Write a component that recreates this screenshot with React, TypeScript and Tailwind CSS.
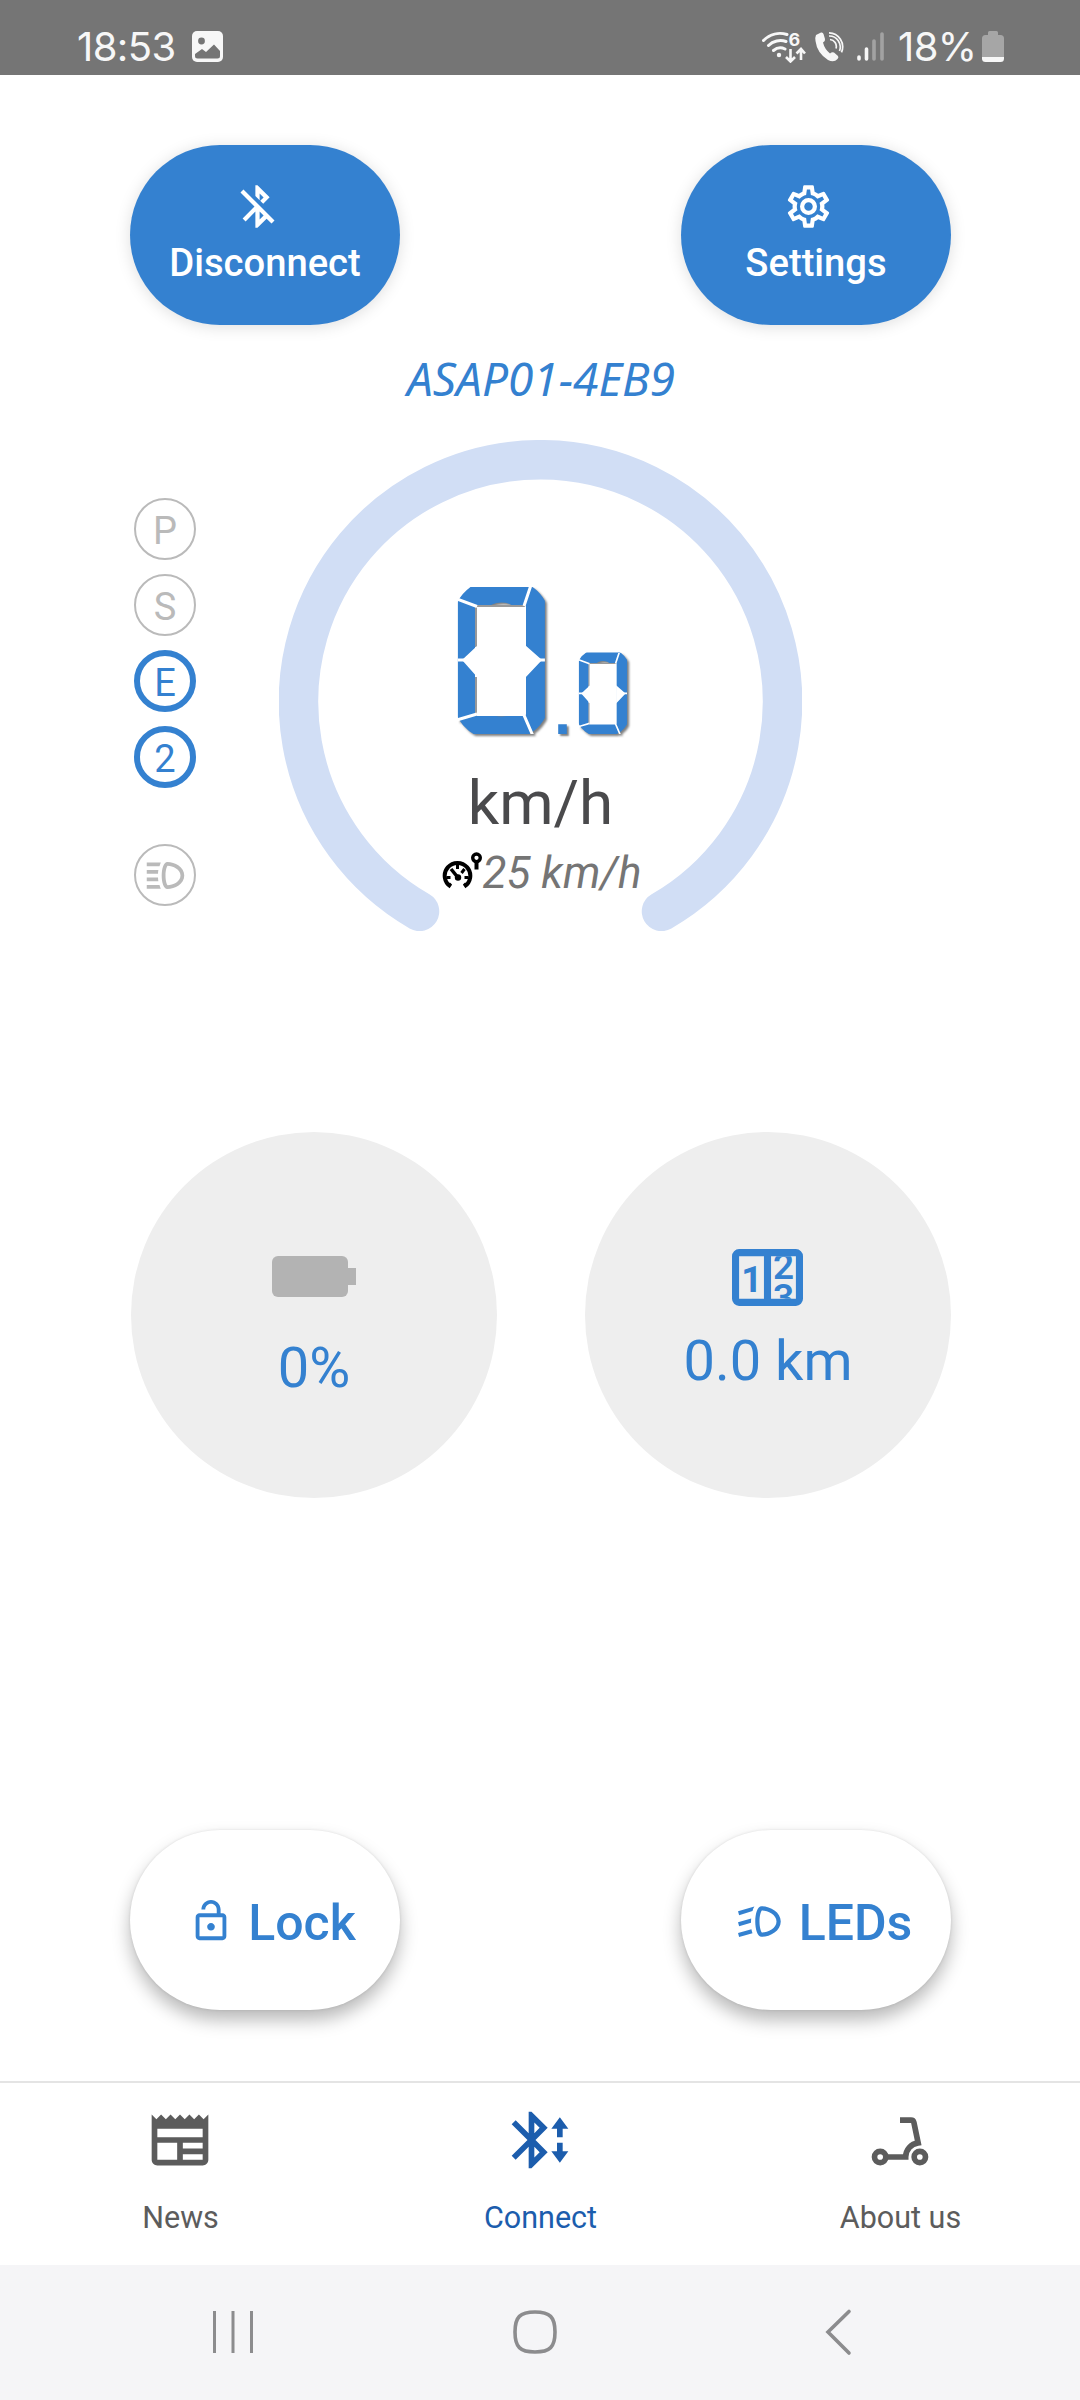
import React from 'react';
import clsx from 'clsx';
import { MdBluetoothDisabled, MdOutlineLockOpen, MdOutlineNewspaper } from 'react-icons/md';

const CogIcon = ({ className }: { className?: string }) => (
  <svg viewBox="0 0 24 24" fill="currentColor" className={className}>
    <path d="M12,8A4,4 0 0,1 16,12A4,4 0 0,1 12,16A4,4 0 0,1 8,12A4,4 0 0,1 12,8M12,10A2,2 0 0,0 10,12A2,2 0 0,0 12,14A2,2 0 0,0 14,12A2,2 0 0,0 12,10M10,22C9.75,22 9.54,21.82 9.5,21.58L9.13,18.93C8.5,18.68 7.96,18.34 7.44,17.94L4.95,18.95C4.73,19.03 4.46,18.95 4.34,18.73L2.34,15.27C2.21,15.05 2.27,14.78 2.46,14.63L4.57,12.97L4.5,12L4.57,11L2.46,9.37C2.27,9.22 2.21,8.95 2.34,8.73L4.34,5.27C4.46,5.05 4.73,4.96 4.95,5.05L7.44,6.05C7.96,5.66 8.5,5.32 9.13,5.07L9.5,2.42C9.54,2.18 9.75,2 10,2H14C14.25,2 14.46,2.18 14.5,2.42L14.87,5.07C15.5,5.32 16.04,5.66 16.56,6.05L19.05,5.05C19.27,4.96 19.54,5.05 19.66,5.27L21.66,8.73C21.79,8.95 21.73,9.22 21.54,9.37L19.43,11L19.5,12L19.43,13L21.54,14.63C21.73,14.78 21.79,15.05 21.66,15.27L19.66,18.73C19.54,18.95 19.27,19.04 19.05,18.95L16.56,17.95C16.04,18.34 15.5,18.68 14.87,18.93L14.5,21.58C14.46,21.82 14.25,22 14,22H10M11.25,4L10.88,6.61C9.68,6.86 8.62,7.5 7.85,8.39L5.44,7.35L4.69,8.65L6.8,10.2C6.4,11.37 6.4,12.64 6.8,13.8L4.68,15.36L5.43,16.66L7.86,15.62C8.63,16.5 9.68,17.14 10.87,17.38L11.24,20H12.76L13.13,17.39C14.32,17.14 15.37,16.5 16.14,15.62L18.57,16.66L19.32,15.36L17.2,13.81C17.6,12.64 17.6,11.37 17.2,10.2L19.31,8.65L18.56,7.35L16.15,8.39C15.38,7.5 14.32,6.86 13.12,6.62L12.75,4H11.25Z" />
  </svg>
);

const lampPath =
  'M13,4.8C9,4.8 9,19.2 13,19.2C17,19.2 22,16.5 22,12C22,7.5 17,4.8 13,4.8M13.1,17.2C12.7,16.8 12,15 12,12C12,9 12.7,7.2 13.1,6.8C16,6.9 20,8.7 20,12C20,15.3 16,17.1 13.1,17.2';

const HighBeamIcon = ({ className }: { className?: string }) => (
  <svg viewBox="0 0 24 24" fill="currentColor" className={className}>
    <path d={lampPath} />
    <path d="M2,5H9.5C9.3,5.6 9,6.3 8.8,7H2V5M8,11H2V9H8.2C8.1,9.6 8,10.3 8,11M8.2,15H2V13H8C8,13.7 8.1,14.4 8.2,15M9.5,19H2V17H8.8C9,17.7 9.2,18.4 9.5,19" />
  </svg>
);

const LowBeamIcon = ({ className }: { className?: string }) => (
  <svg viewBox="0 0 24 24" fill="currentColor" className={className}>
    <path d={lampPath} />
    <path d="M9.6,4.9C9.2,5.5 8.9,6.2 8.7,7.1L2.4,9.1L1.9,7.2L9.6,4.9M8.1,10.6C8,11.3 8,12 8,12.6L2.4,14.2L1.9,12.3L8.1,10.6M8.2,15.6C8.3,16.3 8.5,16.9 8.7,17.5L2.4,19.3L1.9,17.4L8.2,15.6" />
  </svg>
);

const BluetoothTransferIcon = ({ className }: { className?: string }) => (
  <svg viewBox="0 0 24 24" fill="currentColor" className={className}>
    <path d="M14.71,7.71L10.41,12L14.71,16.29L9,22H8V14.41L3.41,19L2,17.59L7.59,12L2,6.41L3.41,5L8,9.59V2H9L14.71,7.71M10,5.83V9.59L11.88,7.71L10,5.83M11.88,16.29L10,14.41V18.17L11.88,16.29M22,8H20V11H18V8H16L19,4L22,8M22,16L19,20L16,16H18V13H20V16H22Z" />
  </svg>
);

const ScooterIcon = ({ className }: { className?: string }) => (
  <svg viewBox="0 0 24 24" fill="none" stroke="currentColor" strokeWidth="2" className={className}>
    <circle cx="5" cy="18" r="2" />
    <circle cx="19" cy="18" r="2" />
    <path d="M7 18h7A5 5 0 0 1 18.4 13L16.9 5.8Q16.7 5 15.9 5H12" />
  </svg>
);

const CounterIcon = ({ className }: { className?: string }) => (
  <svg viewBox="2 4 20 16" className={className}>
    <clipPath id="reel">
      <rect x="13" y="6" width="7" height="12" />
    </clipPath>
    <path
      fillRule="evenodd"
      fill="currentColor"
      d="M4 4h16a2 2 0 0 1 2 2v12a2 2 0 0 1-2 2H4a2 2 0 0 1-2-2V6a2 2 0 0 1 2-2zM4 6v12h7V6zM13 6v12h7V6z"
    />
    <g fill="currentColor" fontFamily="Roboto, sans-serif" fontWeight="700" fontSize="10.4" textAnchor="middle">
      <text x="7.6" y="16">1</text>
      <g clipPath="url(#reel)" fontWeight="600">
        <text x="16.5" y="12.5">2</text>
        <text x="16.5" y="21.2">3</text>
      </g>
    </g>
  </svg>
);

const SpeedLimitIcon = ({ className }: { className?: string }) => (
  <svg viewBox="0 0 40 38" fill="none" stroke="black" className={className}>
    <path d="M8.2 34.6A12.8 12.8 0 1 1 21.8 34.6" strokeWidth="4" />
    <path d="M4 25.5h4M22 25.5h4M15 12v5M22 17l-3 4M8.5 31.5L6 34M21.5 31.5L24 34" strokeWidth="3" />
    <path d="M8.5 17L15 25" strokeWidth="3.5" />
    <circle cx="15.5" cy="25.5" r="3.2" fill="black" stroke="none" />
    <circle cx="34" cy="5.8" r="3.8" strokeWidth="3.4" />
    <path d="M34 9v8.5" strokeWidth="4" />
  </svg>
);

// LCD style digit: the glyph is trimmed to a box and white joints split it into segments
const LcdDigit = ({ className, children }: { className: string; children: React.ReactNode }) => (
  <span className="drop-shadow-[2px_2px_1px_rgba(0,0,0,0.5)]">
    <span
      className={clsx(
        'relative flex h-[0.662em] w-[0.392em] items-center justify-center leading-[0.662em] font-bold [clip-path:inset(0_round_0.045em)]',
        className,
      )}
    >
      <span className="pt-[0.028em]">{children}</span>
      <svg viewBox="0 0 87 147" className="absolute inset-0 h-full w-full">
        <rect x="17" y="18" width="51" height="111" rx="2" fill="white" />
        <path d="M18 129V90M18 60V19H67" fill="none" stroke="black" strokeOpacity="0.4" strokeWidth="2" />
        <path d="M20 58V91L4 73zM67 58V91L84 73z" fill="white" />
        <path d="M-1 12L19 19.500M73 -2L66 19M-1 133L19 127M65 126L75 149M-1 73H8M80 73H88" stroke="white" strokeWidth="3" />
      </svg>
    </span>
  </span>
);

const StatusBar = () => (
  <header className="flex h-[75px] shrink-0 items-end justify-between bg-[#757575] pr-[76px] pb-[13px] pl-[77px] text-[#f7f7f7]">
    <div className="flex h-[31px] items-center gap-[17px]">
      <span className="w-[98px] font-[Inter,sans-serif] text-[40px] leading-[31px] tracking-[-0.6px] whitespace-nowrap">18:53</span>
      <svg viewBox="0 0 31 31" className="size-[31px]">
        <rect width="31" height="31" rx="5" fill="currentColor" />
        <circle cx="9.5" cy="10" r="3.4" fill="#757575" />
        <path d="M3 23l7-5 4 3 8-7.500 6 6.500v5a2.500 2.500 0 0 1-2.500 2.500H5.500A2.500 2.500 0 0 1 3 25z" fill="#757575" />
      </svg>
    </div>
    <div className="flex h-[31px] items-center">
      <svg viewBox="0 0 44 32" fill="none" stroke="currentColor" className="h-[32px] w-[44px]">
        <path d="M1.500 9.500C8 3 17 1 25 3.500M6.500 14.500C11 10 18 8.500 24 10.500M11.500 19.500C15 16.500 19 16 23 18" strokeWidth="3" strokeLinecap="round" />
        <circle cx="17" cy="24" r="2.200" fill="currentColor" stroke="none" />
        <path d="M28.500 18v11M24 26l4.500 4.500L33 26M39 29V18M34.500 22.500L39 18l4 4.500" strokeWidth="2.600" />
        <text x="26.500" y="14.500" fill="currentColor" stroke="none" fontFamily="Inter, sans-serif" fontWeight="700" fontSize="18">6</text>
      </svg>
      <svg viewBox="0 0 30 32" className="ml-[9px] h-[32px] w-[30px]">
        <path d="M1 4L6 1.500Q8 1 8.500 3L10 8Q10.500 10 8 11.500Q9.500 18 15 22.500Q17 20.500 19 21.500L23 25Q24 26.500 22.500 28Q19 32 13 29Q2 22 .500 10Q0 6 1 4z" fill="currentColor" />
        <path d="M15 8.500a7 7 0 0 1 6 9M14 5a11 11 0 0 1 10.500 15M14 1.800a14 14 0 0 1 12.500 19.500" fill="none" stroke="currentColor" strokeWidth="1.700" />
      </svg>
      <svg viewBox="0 0 27 31" stroke="currentColor" strokeWidth="3.600" strokeLinecap="round" className="ml-[12px] h-[31px] w-[27px]">
        <path d="M2 26v2M9.500 18v10" />
        <path d="M17 10v18M25 3v25" opacity="0.35" />
      </svg>
      <span className="ml-[14px] w-[78px] font-[Inter,sans-serif] text-[40px] leading-[31px] tracking-[-0.6px] whitespace-nowrap">18%</span>
      <svg viewBox="0 0 22 31" className="ml-[6px] h-[31px] w-[22px]">
        <path d="M6 1.500Q6 0 7.500 0h7Q16 0 16 1.500V4h2.500Q22 4 22 7.500V26H0V7.500Q0 4 3.500 4H6z" fill="#a6a6a6" />
        <path d="M0 26h22v1.500Q22 31 18.500 31h-15Q0 31 0 27.500z" fill="currentColor" />
      </svg>
    </div>
  </header>
);

const ActionButton = ({ icon, label }: { icon: React.ReactNode; label: string }) => (
  <button className="flex h-[180px] w-[270px] flex-col items-center rounded-full bg-[#3481d0] pt-9 text-white shadow-[0_2px_16px_rgba(0,0,0,0.13)]">
    <span className="mr-4">{icon}</span>
    <span className="mt-[9px] text-[38.2px] leading-[44px] font-medium">{label}</span>
  </button>
);

const ToggleButton = ({ icon, label }: { icon: React.ReactNode; label: string }) => (
  <button className="flex h-[180px] w-[270px] items-center justify-center rounded-full bg-white pt-0.5 pl-[14px] text-[#3481d0] shadow-[0_0_3px_rgba(0,0,0,0.1),0_10px_18px_rgba(0,0,0,0.28)]">
    {icon}
    <span className="mt-1 text-[50px] leading-[60px] font-medium">{label}</span>
  </button>
);

const ModeBadge = ({ active, className, children }: { active?: boolean; className?: string; children: React.ReactNode }) => (
  <div
    className={clsx(
      'flex size-[62px] items-center justify-center rounded-full text-[38px]',
      active ? 'border-[6px] border-[#3481d0] text-[#3481d0]' : 'border-2 border-[#bababa] text-[#bababa]',
      className,
    )}
  >
    {children}
  </div>
);

const Speedometer = () => (
  <div className="grid h-[492px] w-[523px]">
    <svg viewBox="0 0 523 492" className="col-start-1 row-start-1 h-[492px] w-[523px]">
      <path d="M140.500 471.300A242 242 0 1 1 382.500 471.300" fill="none" stroke="#d1def5" strokeWidth="39.500" strokeLinecap="round" />
    </svg>
    <div className="z-10 col-start-1 row-start-1 flex flex-col items-center pt-[147px]">
      <div className="flex h-[147px] items-end pl-1 text-[#3481d0]">
        <LcdDigit className="text-[222px]">0</LcdDigit>
        <span className="-mb-[14px] w-[34px] pl-[3px] text-center font-['Liberation_Sans',sans-serif] text-[90px] leading-none [text-shadow:2px_2px_2px_rgba(0,0,0,0.5)]">
          <span className="-ml-[2px]">.</span>
        </span>
        <LcdDigit className="text-[123px]">0</LcdDigit>
      </div>
      <div className="mt-[33px] text-[62px] leading-[72px] text-[#4a4a4c]">km/h</div>
      <div className="mt-2 flex items-center pl-[2px]">
        <SpeedLimitIcon className="mt-[-4px] h-[38px] w-[41px]" />
        <span className="text-[44px] leading-[52px] text-[#757575] italic">25 km/h</span>
      </div>
    </div>
  </div>
);

const StatCircle = ({ icon, value, className }: { icon: React.ReactNode; value: string; className: string }) => (
  <div className={clsx('flex size-[366px] flex-col items-center rounded-full bg-[#eeeeee] text-[#3481d0]', className)}>
    {icon}
    <span className="text-[56px] leading-[64px]">{value}</span>
  </div>
);

const Tab = ({ icon, label, active }: { icon: React.ReactNode; label: string; active?: boolean }) => (
  <div className={clsx('flex flex-1 flex-col items-center pt-[23px]', active ? 'text-[#1c5dad]' : 'text-[#5c5c5c]')}>
    {icon}
    <span className="mt-[26px] pl-px text-[30.5px] leading-[36px]">{label}</span>
  </div>
);

const SystemNav = () => (
  <nav className="flex h-[135px] shrink-0 items-center bg-[#f5f5f7] text-[#8c8c8e]">
    <svg viewBox="0 0 1080 135" fill="none" stroke="currentColor" strokeWidth="3.600" className="h-[135px] w-full">
      <path d="M214.500 46v42M233 46v42M251.500 46v42" strokeWidth="3" />
      <path d="M535 47c15 0 20 5 20 20s-5 20-20 20-20-5-20-20 5-20 20-20z" />
      <path d="M849 46.500L828 67l21 21" strokeLinecap="round" />
    </svg>
  </nav>
);

export default function App() {
  return (
    <div className="flex h-[2400px] w-[1080px] flex-col overflow-hidden bg-white font-[Roboto,sans-serif]">
      <StatusBar />

      <main className="flex flex-1 flex-col">
        <div className="flex justify-between pt-[70px] pr-[129px] pl-[130px]">
          <ActionButton icon={<MdBluetoothDisabled className="size-[51px]" />} label="Disconnect" />
          <ActionButton icon={<CogIcon className="size-[51px]" />} label="Settings" />
        </div>

        <h1 className="mt-[23px] pl-[2px] text-center font-['Noto_Sans',sans-serif] text-[46px] leading-[60px] text-[#3481d0] italic">ASAP01-4EB9</h1>

        {/* Ride modes and speed */}
        <div className="flex gap-[83px] pt-8 pl-[134px]">
          <div className="flex flex-col gap-[14px] pt-[58px]">
            <ModeBadge className="pt-[4px]">P</ModeBadge>
            <ModeBadge className="pt-[4px]">S</ModeBadge>
            <ModeBadge active className="pt-[5px]">E</ModeBadge>
            <ModeBadge active className="pt-[5px]">2</ModeBadge>
            <ModeBadge className="mt-[42px]">
              <HighBeamIcon className="size-[45px]" />
            </ModeBadge>
          </div>
          <Speedometer />
        </div>

        {/* Battery and mileage */}
        <div className="mt-[200px] flex justify-between pr-[129px] pl-[131px]">
          <StatCircle
            className="gap-[39px] pt-[124px]"
            value="0%"
            icon={
              <div className="flex h-[41px] items-center pr-px">
                <div className="h-[41px] w-[76px] rounded-[6px] bg-[#b3b3b3]" />
                <div className="h-[17px] w-[8px] bg-[#b3b3b3]" />
              </div>
            }
          />
          <StatCircle className="gap-[23px] pt-[117px]" value="0.0 km" icon={<CounterIcon className="mr-[2px] h-[57px] w-[71px]" />} />
        </div>

        <div className="mt-[332px] flex justify-between pr-[129px] pl-[130px]">
          <ToggleButton icon={<MdOutlineLockOpen className="mr-[14px] size-[46px]" />} label="Lock" />
          <ToggleButton icon={<LowBeamIcon className="mr-[14px] size-[51px]" />} label="LEDs" />
        </div>
      </main>

      <footer className="flex h-[184px] shrink-0 border-t-2 border-[#e4e4e4]">
        <Tab icon={<MdOutlineNewspaper className="size-[68px]" />} label="News" />
        <Tab icon={<BluetoothTransferIcon className="size-[68px]" />} label="Connect" active />
        <Tab icon={<ScooterIcon className="size-[68px]" />} label="About us" />
      </footer>

      <SystemNav />
    </div>
  );
}
